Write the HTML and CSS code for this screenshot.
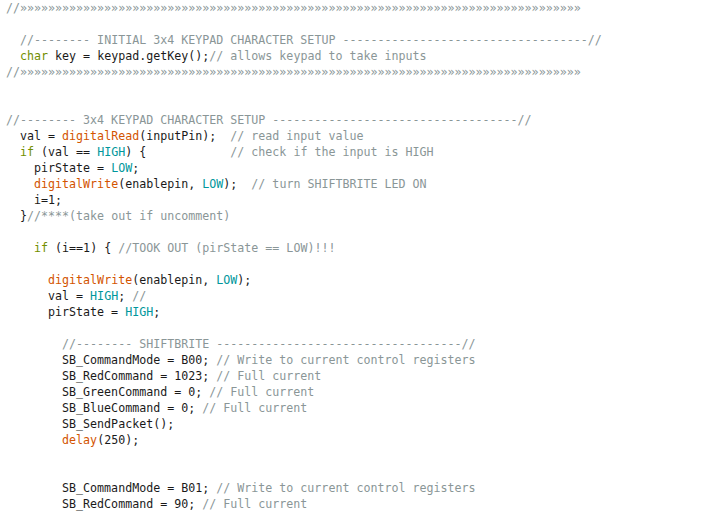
FILE: index.html
```html
<!DOCTYPE html>
<html>
<head>
<meta charset="utf-8">
<link rel="stylesheet" href="styles.css">
</head>
<body>
<pre class="code"><span class="c">//»»»»»»»»»»»»»»»»»»»»»»»»»»»»»»»»»»»»»»»»»»»»»»»»»»»»»»»»»»»»»»»»»»»»»»»»»»»»»»»»</span>

  <span class="c">//-------- INITIAL 3x4 KEYPAD CHARACTER SETUP -----------------------------------//</span>
  <span class="k">char</span> key = keypad.getKey();<span class="c">// allows keypad to take inputs</span>
<span class="c">//»»»»»»»»»»»»»»»»»»»»»»»»»»»»»»»»»»»»»»»»»»»»»»»»»»»»»»»»»»»»»»»»»»»»»»»»»»»»»»»»</span>


<span class="c">//-------- 3x4 KEYPAD CHARACTER SETUP -----------------------------------//</span>
  val = <span class="f">digitalRead</span>(inputPin);  <span class="c">// read input value</span>
  <span class="k">if</span> (val == <span class="n">HIGH</span>) {            <span class="c">// check if the input is HIGH</span>
    pirState = <span class="n">LOW</span>;
    <span class="f">digitalWrite</span>(enablepin, <span class="n">LOW</span>);  <span class="c">// turn SHIFTBRITE LED ON</span>
    i=1;
  }<span class="c">//****(take out if uncomment)</span>

    <span class="k">if</span> (i==1) { <span class="c">//TOOK OUT (pirState == LOW)!!!</span>

      <span class="f">digitalWrite</span>(enablepin, <span class="n">LOW</span>);
      val = <span class="n">HIGH</span>; <span class="c">//</span>
      pirState = <span class="n">HIGH</span>;

        <span class="c">//-------- SHIFTBRITE -----------------------------------//</span>
        SB_CommandMode = B00; <span class="c">// Write to current control registers</span>
        SB_RedCommand = 1023; <span class="c">// Full current</span>
        SB_GreenCommand = 0; <span class="c">// Full current</span>
        SB_BlueCommand = 0; <span class="c">// Full current</span>
        SB_SendPacket();
        <span class="f">delay</span>(250);


        SB_CommandMode = B01; <span class="c">// Write to current control registers</span>
        SB_RedCommand = 90; <span class="c">// Full current</span>
</pre>
</body>
</html>
```
FILE: styles.css
```css
html, body {
  margin: 0;
  padding: 0;
  background: #ffffff;
}

.code {
  margin: 0;
  padding: 0 0 0 6px;
  font-family: "DejaVu Sans Mono", "Liberation Mono", monospace;
  font-size: 11.65px;
  line-height: 16px;
  color: #1a1a1a;
  white-space: pre;
  overflow: hidden;
}

.c { color: #8a9697; }
.k { color: #728e00; }
.f { color: #d35400; }
.n { color: #00979c; }
```
